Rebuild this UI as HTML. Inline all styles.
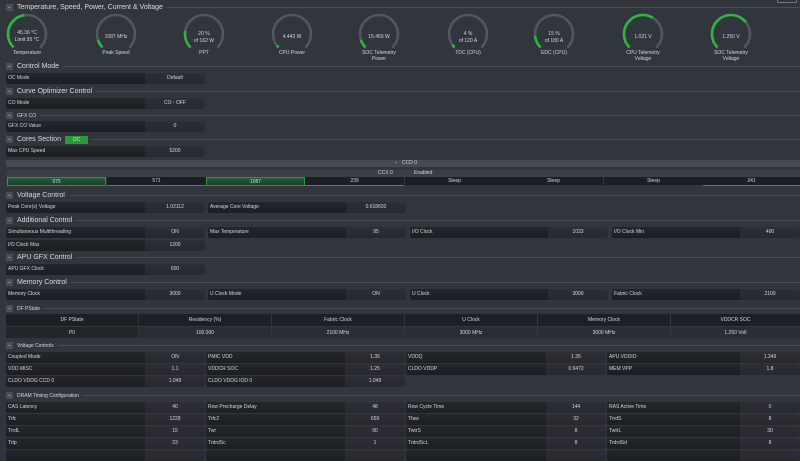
<!DOCTYPE html>
<html><head><meta charset="utf-8"><style>
*{margin:0;padding:0;box-sizing:border-box}
body{width:800px;height:454px;background:#31353c;overflow:hidden;position:relative;font-family:"Liberation Sans",sans-serif;color:#d4d7dc}
.h{position:absolute;left:6px;right:0;height:9px;display:flex;align-items:center;font-size:7px;color:#d8dbe0}
.h i{width:7px;height:7px;background:#4a4e56;margin-right:4px;flex:none;font-style:normal;font-size:5px;line-height:7px;text-align:center;color:#ccc}
.h b{font-weight:normal;margin-right:4px;white-space:nowrap}
.h s{flex:1;height:1px;background:#4a4e56;text-decoration:none}
.h.sm{font-size:5px}
.r{position:absolute;height:11px;display:flex;font-size:5px;line-height:11px;white-space:nowrap}
.r span:first-child{flex:1;background:linear-gradient(#23262b,#1b1e22);padding-left:2px;border-radius:2px 0 0 2px}
.r span:last-child{width:60px;background:linear-gradient(#2c2f35,#26292e);text-align:center;border-radius:0 3px 3px 0}
.c{position:absolute;font-size:5px;text-align:center;line-height:10px}
.t{position:absolute;font-size:5px;text-align:center;display:flex;align-items:center;justify-content:center}
</style></head><body>
<div style="position:absolute;left:777px;top:-2px;width:20px;height:5px;border:1px solid #777;border-radius:1px"></div>
<div class="h" style="top:3px"><i>⌄</i><b>Temperature, Speed, Power, Current &amp; Voltage</b><s></s></div>
<svg style="position:absolute;left:0;top:0" width="800" height="66" font-family="Liberation Sans" font-size="5" fill="#d4d7dc" text-anchor="middle">
<g fill="none" stroke-width="2.6">
<g transform="rotate(135 27 34)"><circle cx="27" cy="34" r="19" stroke="#52565e" stroke-dasharray="89.5 200"/><circle cx="27" cy="34" r="19" stroke="#2fb53c" stroke-dasharray="42 200"/></g>
<g transform="rotate(135 116 34)"><circle cx="116" cy="34" r="19" stroke="#52565e" stroke-dasharray="89.5 200"/><circle cx="116" cy="34" r="19" stroke="#2fb53c" stroke-dasharray="9 200"/></g>
<g transform="rotate(135 204 34)"><circle cx="204" cy="34" r="19" stroke="#52565e" stroke-dasharray="89.5 200"/><circle cx="204" cy="34" r="19" stroke="#2fb53c" stroke-dasharray="18 200"/></g>
<g transform="rotate(135 292 34)"><circle cx="292" cy="34" r="19" stroke="#52565e" stroke-dasharray="89.5 200"/><circle cx="292" cy="34" r="19" stroke="#2fb53c" stroke-dasharray="2.5 200"/></g>
<g transform="rotate(135 379 34)"><circle cx="379" cy="34" r="19" stroke="#52565e" stroke-dasharray="89.5 200"/><circle cx="379" cy="34" r="19" stroke="#2fb53c" stroke-dasharray="9 200"/></g>
<g transform="rotate(135 468 34)"><circle cx="468" cy="34" r="19" stroke="#52565e" stroke-dasharray="89.5 200"/><circle cx="468" cy="34" r="19" stroke="#2fb53c" stroke-dasharray="3.5 200"/></g>
<g transform="rotate(135 554 34)"><circle cx="554" cy="34" r="19" stroke="#52565e" stroke-dasharray="89.5 200"/><circle cx="554" cy="34" r="19" stroke="#2fb53c" stroke-dasharray="13 200"/></g>
<g transform="rotate(135 643 34)"><circle cx="643" cy="34" r="19" stroke="#52565e" stroke-dasharray="89.5 200"/><circle cx="643" cy="34" r="19" stroke="#2fb53c" stroke-dasharray="55 200"/></g>
<g transform="rotate(135 731 34)"><circle cx="731" cy="34" r="19" stroke="#52565e" stroke-dasharray="89.5 200"/><circle cx="731" cy="34" r="19" stroke="#2fb53c" stroke-dasharray="62 200"/></g>
</g>
<text x="27" y="34">45.36 °C</text><text x="27" y="41">Limit 95 °C</text><text x="27" y="54">Temperature</text>
<text x="116" y="38">1087  MHz</text><text x="116" y="54">Peak Speed</text>
<text x="204" y="35">20 %</text><text x="204" y="42">of 162 W</text><text x="204" y="54">PPT</text>
<text x="292" y="38">4.443 W</text><text x="292" y="54">CPU Power</text>
<text x="379" y="38">15.450 W</text><text x="379" y="54">SOC Telemetry</text><text x="379" y="60">Power</text>
<text x="468" y="35">4 %</text><text x="468" y="42">of 120 A</text><text x="468" y="54">TDC (CPU)</text>
<text x="554" y="35">15 %</text><text x="554" y="42">of 180 A</text><text x="554" y="54">EDC (CPU)</text>
<text x="643" y="38">1.021 V</text><text x="643" y="54">CPU Telemetry</text><text x="643" y="60">Voltage</text>
<text x="731" y="38">1.250 V</text><text x="731" y="54">SOC Telemetry</text><text x="731" y="60">Voltage</text>
</svg>

<div class="h" style="top:62px"><i>⌄</i><b>Control Mode</b><s></s></div>
<div class="r" style="left:6px;top:73px;width:199px"><span>OC Mode</span><span>Default</span></div>
<div class="h" style="top:87px"><i>⌄</i><b>Curve Optimizer Control</b><s></s></div>
<div class="r" style="left:6px;top:98px;width:199px"><span>CO Mode</span><span>CO - OFF</span></div>
<div class="h sm" style="top:111px"><i>⌄</i><b>GFX CO</b><s></s></div>
<div class="r" style="left:6px;top:121px;width:199px"><span>GFX CO Value</span><span>0</span></div>
<div class="h" style="top:135px"><i>⌄</i><b>Cores Section</b><span style="background:#2a9a36;width:23px;height:8px;font-size:5px;line-height:8px;text-align:center;margin-right:4px;border-radius:1px">OC</span><s></s></div>
<div class="r" style="left:6px;top:146px;width:199px"><span>Max CPU Speed</span><span>5200</span></div>

<div style="position:absolute;left:6px;right:0;top:160px;height:7px;background:#454951;font-size:5px;line-height:7px"><span style="position:absolute;left:389px">›</span><span style="position:absolute;left:396px">CCD 0</span></div>
<div style="position:absolute;left:6px;right:0;top:170px;height:7px;background:#3a3e45;font-size:5px;line-height:7px"><span style="position:absolute;left:372px">CCX 0</span><span style="position:absolute;left:408px">Enabled</span></div>
<div class="c" style="left:7px;top:177px;width:99px;height:9px;line-height:9px;background:linear-gradient(#25603a,#1c3f28);border:1px solid #2a9a3a">975</div>
<div class="c" style="left:107px;top:177px;width:99px;height:9px;line-height:9px;background:#1b1e22;border-bottom:1px solid #2a9a3a">571</div>
<div class="c" style="left:206px;top:177px;width:99px;height:9px;line-height:9px;background:linear-gradient(#25603a,#1c3f28);border:1px solid #2a9a3a">1087</div>
<div class="c" style="left:305px;top:177px;width:99px;height:9px;line-height:9px;background:#1b1e22;border-bottom:1px solid #2a9a3a">239</div>
<div class="c" style="left:405px;top:177px;width:99px;height:9px;line-height:9px;background:#1b1e22;border-bottom:1px solid #243a2a">Sleep</div>
<div class="c" style="left:504px;top:177px;width:99px;height:9px;line-height:9px;background:#1b1e22;border-bottom:1px solid #243a2a">Sleep</div>
<div class="c" style="left:604px;top:177px;width:99px;height:9px;line-height:9px;background:#1b1e22;border-bottom:1px solid #243a2a">Sleep</div>
<div class="c" style="left:703px;top:177px;width:97px;height:9px;line-height:9px;background:#1b1e22;border-bottom:1px solid #2a9a3a">241</div>

<div class="h" style="top:191px"><i>⌄</i><b>Voltage Control</b><s></s></div>
<div class="r" style="left:6px;top:202px;width:199px"><span>Peak Core(s) Voltage</span><span>1.02112</span></div>
<div class="r" style="left:208px;top:202px;width:198px"><span>Average Core Voltage</span><span>0.618602</span></div>
<div class="h" style="top:216px"><i>⌄</i><b>Additional Control</b><s></s></div>
<div class="r" style="left:6px;top:227px;width:199px"><span>Simultaneous Multithreading</span><span>ON</span></div>
<div class="r" style="left:208px;top:227px;width:198px"><span>Max Temperature</span><span>95</span></div>
<div class="r" style="left:410px;top:227px;width:198px"><span>I/O Clock</span><span>1033</span></div>
<div class="r" style="left:612px;top:227px;width:188px"><span>I/O Clock Min</span><span>400</span></div>
<div class="r" style="left:6px;top:240px;width:199px"><span>I/O Clock Max</span><span>1200</span></div>
<div class="h" style="top:253px"><i>⌄</i><b>APU GFX Control</b><s></s></div>
<div class="r" style="left:6px;top:264px;width:199px"><span>APU GFX Clock</span><span>600</span></div>
<div class="h" style="top:278px"><i>⌄</i><b>Memory Control</b><s></s></div>
<div class="r" style="left:6px;top:289px;width:199px"><span>Memory Clock</span><span>3000</span></div>
<div class="r" style="left:208px;top:289px;width:198px"><span>U Clock Mode</span><span>ON</span></div>
<div class="r" style="left:410px;top:289px;width:198px"><span>U Clock</span><span>3000</span></div>
<div class="r" style="left:612px;top:289px;width:188px"><span>Fabric Clock</span><span>2100</span></div>

<div class="h sm" style="top:304px"><i>⌄</i><b>DF PState</b><s></s></div>
<div class="t" style="left:6px;top:314px;width:132px;height:12px;background:#1c1f23">DF PState</div>
<div class="t" style="left:139px;top:314px;width:132px;height:12px;background:#1c1f23">Residency (%)</div>
<div class="t" style="left:272px;top:314px;width:132px;height:12px;background:#1c1f23">Fabric Clock</div>
<div class="t" style="left:405px;top:314px;width:132px;height:12px;background:#1c1f23">U Clock</div>
<div class="t" style="left:538px;top:314px;width:132px;height:12px;background:#1c1f23">Memory Clock</div>
<div class="t" style="left:671px;top:314px;width:129px;height:12px;background:#1c1f23">VDDCR SOC</div>
<div class="t" style="left:6px;top:327px;width:132px;height:11px;background:#22252a">P0</div>
<div class="t" style="left:139px;top:327px;width:132px;height:11px;background:#2a2d33">100.000</div>
<div class="t" style="left:272px;top:327px;width:132px;height:11px;background:#2a2d33">2100 MHz</div>
<div class="t" style="left:405px;top:327px;width:132px;height:11px;background:#2a2d33">3000 MHz</div>
<div class="t" style="left:538px;top:327px;width:132px;height:11px;background:#2a2d33">3000 MHz</div>
<div class="t" style="left:671px;top:327px;width:129px;height:11px;background:#2a2d33">1.250 Volt</div>

<div class="h sm" style="top:341px"><i>⌄</i><b>Voltage Controls</b><s></s></div>
<div class="r" style="left:6px;top:352px;width:199px"><span>Coupled Mode</span><span>ON</span></div>
<div class="r" style="left:206px;top:352px;width:199px"><span>PMIC VDD</span><span>1.35</span></div>
<div class="r" style="left:406px;top:352px;width:200px"><span>VDDQ</span><span>1.35</span></div>
<div class="r" style="left:607px;top:352px;width:193px"><span>APU VDDIO</span><span>1.349</span></div>
<div class="r" style="left:6px;top:364px;width:199px"><span>VDD MISC</span><span>1.1</span></div>
<div class="r" style="left:206px;top:364px;width:199px"><span>VDDCR SOC</span><span>1.25</span></div>
<div class="r" style="left:406px;top:364px;width:200px"><span>CLDO VDDP</span><span>0.9472</span></div>
<div class="r" style="left:607px;top:364px;width:193px"><span>MEM VPP</span><span>1.8</span></div>
<div class="r" style="left:6px;top:376px;width:199px"><span>CLDO VDDG CCD 0</span><span>1.049</span></div>
<div class="r" style="left:206px;top:376px;width:199px"><span>CLDO VDDG IOD 0</span><span>1.049</span></div>

<div class="h sm" style="top:391px"><i>⌄</i><b>DRAM Timing Configuration</b><s></s></div>
<div class="r" style="left:6px;top:402px;width:199px"><span>CAS Latency</span><span>40</span></div>
<div class="r" style="left:206px;top:402px;width:199px"><span>Row Precharge Delay</span><span>48</span></div>
<div class="r" style="left:406px;top:402px;width:200px"><span>Row Cycle Time</span><span>144</span></div>
<div class="r" style="left:607px;top:402px;width:193px"><span>RAS Active Time</span><span>0</span></div>
<div class="r" style="left:6px;top:414px;width:199px"><span>Trfc</span><span>1228</span></div>
<div class="r" style="left:206px;top:414px;width:199px"><span>Trfc2</span><span>659</span></div>
<div class="r" style="left:406px;top:414px;width:200px"><span>Tfaw</span><span>32</span></div>
<div class="r" style="left:607px;top:414px;width:193px"><span>TrrdS</span><span>8</span></div>
<div class="r" style="left:6px;top:426px;width:199px"><span>TrrdL</span><span>15</span></div>
<div class="r" style="left:206px;top:426px;width:199px"><span>Twr</span><span>90</span></div>
<div class="r" style="left:406px;top:426px;width:200px"><span>TwtrS</span><span>8</span></div>
<div class="r" style="left:607px;top:426px;width:193px"><span>TwtrL</span><span>30</span></div>
<div class="r" style="left:6px;top:438px;width:199px"><span>Trtp</span><span>23</span></div>
<div class="r" style="left:206px;top:438px;width:199px"><span>TrdrdSc</span><span>1</span></div>
<div class="r" style="left:406px;top:438px;width:200px"><span>TrdrdScL</span><span>8</span></div>
<div class="r" style="left:607px;top:438px;width:193px"><span>TrdrdSd</span><span>8</span></div>
<div class="r" style="left:6px;top:450px;width:199px"><span></span><span></span></div>
<div class="r" style="left:206px;top:450px;width:199px"><span></span><span></span></div>
<div class="r" style="left:406px;top:450px;width:200px"><span></span><span></span></div>
<div class="r" style="left:607px;top:450px;width:193px"><span></span><span></span></div>
</body></html>
